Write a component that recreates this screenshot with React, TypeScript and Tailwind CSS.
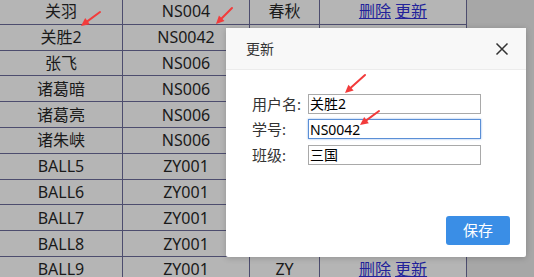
import React from 'react'

const rows = [
    { name: '关羽', no: 'NS004', cls: '春秋' },
    { name: '关胜2', no: 'NS0042', cls: '' },
    { name: '张飞', no: 'NS006', cls: '' },
    { name: '诸葛暗', no: 'NS006', cls: '' },
    { name: '诸葛亮', no: 'NS006', cls: '' },
    { name: '诸朱峡', no: 'NS006', cls: '' },
    { name: 'BALL5', no: 'ZY001', cls: '' },
    { name: 'BALL6', no: 'ZY001', cls: '' },
    { name: 'BALL7', no: 'ZY001', cls: '' },
    { name: 'BALL8', no: 'ZY001', cls: '' },
    { name: 'BALL9', no: 'ZY001', cls: 'ZY' },
]

const cell = 'h-[25.8px] border-b border-r border-[#4d4d6e] text-center align-middle p-0'

const Arrow = ({ x1, y1, x2, y2 }: { x1: number; y1: number; x2: number; y2: number }) => {
    const a = Math.atan2(y2 - y1, x2 - x1)
    const l = 9
    const w = 0.45
    const p1 = `${x2 - l * Math.cos(a - w)},${y2 - l * Math.sin(a - w)}`
    const p2 = `${x2 - l * Math.cos(a + w)},${y2 - l * Math.sin(a + w)}`
    return (
        <g>
            <line x1={x1} y1={y1} x2={x2 - 4 * Math.cos(a)} y2={y2 - 4 * Math.sin(a)} stroke='#f23b3b' strokeWidth='2' strokeLinecap='round' />
            <polygon points={`${x2},${y2} ${p1} ${p2}`} fill='#f23b3b' />
        </g>
    )
}

const Field = ({ label, value, focused }: { label: string; value: string; focused?: boolean }) => (
    <div className='flex items-center h-[25.5px]'>
        <span className='w-[56px] text-[15px] text-[#333]'>{label}</span>
        <input
            readOnly
            value={value}
            className={`w-[173px] h-[20px] px-[1px] text-[14px] text-black outline-none bg-white ${focused ? 'border border-[#5b8fd6] shadow-[0_0_2px_#8fb5ea]' : 'border border-[#a9a9a9]'}`}
        />
    </div>
)

export default function App() {
    return (
        <div
            className='relative w-[534px] h-[277px] overflow-hidden bg-[#a7a7a7]'
            style={{ fontFamily: '"Noto Sans", "Noto Sans CJK SC", sans-serif' }}
        >
            <table className='-mt-[1px] border-separate border-spacing-0 text-[16px] text-[#1a1a1a] bg-[#b5b5b5]'>
                <tbody>
                    {rows.map((r, i) => (
                        <tr key={i}>
                            <td className={`${cell} w-[123px]`}>{r.name}</td>
                            <td className={`${cell} w-[127px]`}>{r.no}</td>
                            <td className={`${cell} w-[70px]`}>{r.cls}</td>
                            <td className={`${cell} w-[147px]`}>
                                <span className='text-[#22229a] underline'>删除</span>{' '}
                                <span className='text-[#22229a] underline'>更新</span>
                            </td>
                        </tr>
                    ))}
                </tbody>
            </table>

            <div className='absolute left-[226px] top-[28px] w-[300px] h-[229px] bg-white rounded-[2px] shadow-[0_1px_6px_rgba(0,0,0,0.2)] flex flex-col'>
                <div className='h-[42px] flex items-center justify-between pl-[20px] pr-[17px] bg-[#f8f8f8] border-b border-[#ececec]'>
                    <span className='text-[14px] text-[#333]'>更新</span>
                    <svg width='14' height='14' viewBox='0 0 14 14'>
                        <path d='M1.5 1.5 L12.5 12.5 M12.5 1.5 L1.5 12.5' stroke='#333' strokeWidth='1.5' />
                    </svg>
                </div>
                <div className='pl-[26px] pt-[21px] flex flex-col'>
                    <Field label='用户名:' value='关胜2' />
                    <Field label='学号:' value='NS0042' focused />
                    <Field label='班级:' value='三国' />
                </div>
                <div className='flex justify-end pr-[16px] mt-auto mb-[12px]'>
                    <button className='w-[64px] h-[29px] rounded-[3px] bg-[#3a8ee6] text-white text-[15px]'>保存</button>
                </div>
            </div>

            <svg className='absolute left-0 top-0 pointer-events-none' width='534' height='277'>
                <Arrow x1={100} y1={12} x2={81} y2={26} />
                <Arrow x1={232} y1={8} x2={216} y2={24} />
                <Arrow x1={365} y1={75} x2={345} y2={93} />
                <Arrow x1={379} y1={111} x2={360} y2={125} />
            </svg>
        </div>
    )
}
